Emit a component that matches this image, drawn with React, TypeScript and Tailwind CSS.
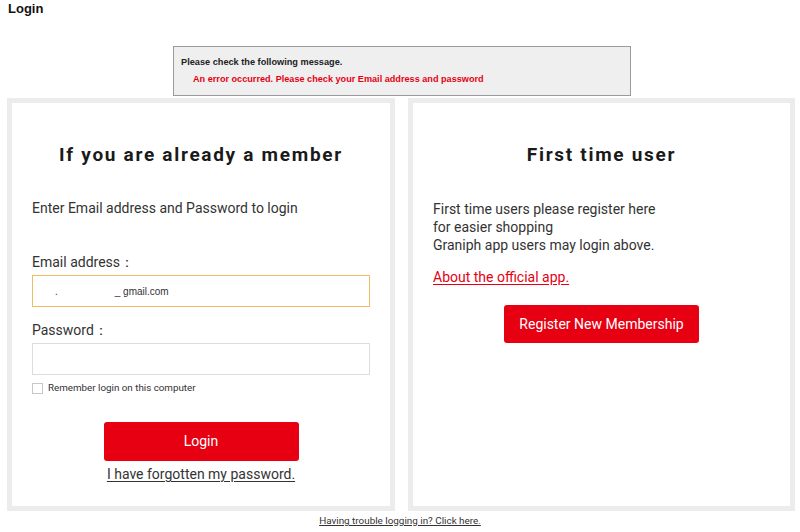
import React from "react";

export default function App() {
  return (
    <div className="w-[800px] h-[532px] bg-white overflow-hidden text-[#333] [font-family:Roboto,'Liberation_Sans',sans-serif]">
      <h1 className="pl-[8px] pt-[1px] text-[13px] leading-[16px] font-bold text-[#111] [font-family:'Liberation_Sans',Arial,sans-serif]">
        Login
      </h1>
      <div className="ml-[173px] mt-[29px] w-[458px] h-[50px] bg-[#efefef] border border-[#9a9a9a] pl-[7px] pt-[9px]">
        <p className="text-[9.2px] leading-[12px] font-bold text-[#222] [font-family:'Liberation_Sans',Arial,sans-serif]">
          Please check the following message.
        </p>
        <p className="mt-[5px] ml-[12px] text-[9.15px] leading-[12px] font-bold text-[#e60012] [font-family:'Liberation_Sans',Arial,sans-serif]">
          An error occurred. Please check your Email address and password
        </p>
      </div>
      <div className="mt-[2px] ml-[7px] flex gap-[13px]">
        <section className="w-[388px] h-[413px] border-[5px] border-[#ececec] px-[20px]">
          <h2 className="mt-[40px] text-center text-[19px] leading-[24px] font-bold tracking-[1.7px] text-[#1a1a1a]">
            If you are already a member
          </h2>
          <p className="mt-[32px] text-[14px] leading-[18px] text-[#333]">
            Enter Email address and Password to login
          </p>
          <label className="block mt-[36px] text-[14px] leading-[18px] text-[#333]">
            Email address：
          </label>
          <div className="mt-[4px] h-[32px] border border-[#f0bc68] flex items-center text-[10px] text-[#333] [font-family:'Liberation_Sans',Arial,sans-serif]">
            <span className="ml-[22px]">.</span>
            <span className="ml-[57px]">_ gmail.com</span>
          </div>
          <label className="block mt-[14px] text-[14px] leading-[18px] text-[#333]">
            Password：
          </label>
          <div className="mt-[4px] h-[32px] border border-[#dcdcdc]"></div>
          <div className="mt-[7px] flex items-center gap-[5px]">
            <span className="w-[11px] h-[11px] border border-[#c8c8c8] bg-white"></span>
            <span className="text-[9.8px] leading-[12px] text-[#333]">Remember login on this computer</span>
          </div>
          <div className="mt-[28px] flex justify-center">
            <button className="w-[195px] h-[39px] rounded-[3px] bg-[#e60012] text-white text-[14px]">
              Login
            </button>
          </div>
          <p className="mt-[4px] text-center text-[14px] leading-[18px] text-[#333] underline underline-offset-2">
            I have forgotten my password.
          </p>
        </section>
        <section className="w-[387px] h-[413px] border-[5px] border-[#ececec] px-[20px]">
          <h2 className="mt-[40px] text-center text-[19px] leading-[24px] font-bold tracking-[1.7px] text-[#1a1a1a]">
            First time user
          </h2>
          <p className="mt-[33px] text-[14px] leading-[18px] text-[#333]">
            First time users please register here
            <br />
            for easier shopping
            <br />
            Graniph app users may login above.
          </p>
          <p className="mt-[14px] text-[14px] leading-[18px] text-[#e60012] underline underline-offset-2">
            About the official app.
          </p>
          <div className="mt-[19px] flex justify-center">
            <button className="w-[195px] h-[38px] rounded-[3px] bg-[#e60012] text-white text-[14px]">
              Register New Membership
            </button>
          </div>
        </section>
      </div>
      <p className="mt-[3px] text-center text-[9.9px] leading-[14px] text-[#333] underline">
        Having trouble logging in? Click here.
      </p>
    </div>
  );
}
